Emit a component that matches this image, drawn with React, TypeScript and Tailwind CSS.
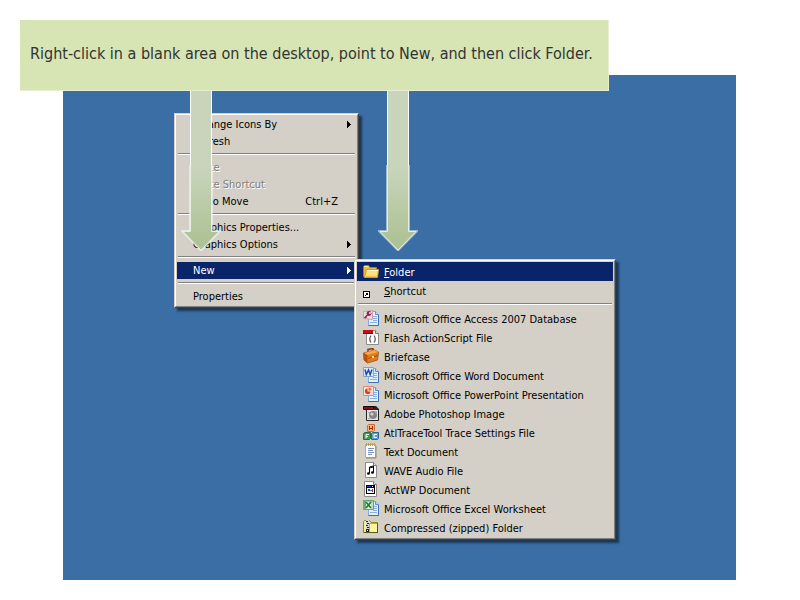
import type { ReactNode } from "react";
import clsx from "clsx";

function Icon({ children }: { children: ReactNode }) {
  return (
    <svg viewBox="0 0 16 16" className="h-4 w-4 shrink-0" aria-hidden="true">
      {children}
    </svg>
  );
}

function FolderIcon() {
  return (
    <Icon>
      <path d="M.5 13.5v-10l1-1h4l1.5 2h6.5v9z" fill="#f0b93c" stroke="#b9791a" />
      <path d="M1.5 3.5h4" stroke="#fff0a8" />
      <path d="M1.5 14.5l2-8h12l-1 8z" fill="#ffe07a" stroke="#d79b27" />
      <path d="M4 7.5h11" stroke="#fff9cf" />
      <path d="M3 13.5h11" stroke="#f3bf4a" />
    </Icon>
  );
}

function ShortcutIcon() {
  return (
    <Icon>
      <g shapeRendering="crispEdges">
        <path d="M0 9h7v7H0z" fill="#000" />
        <path d="M1 10h5v5H1z" fill="#fff" />
        <path d="M3 11h2v2H4v-1H3zM3 12h1v1H3zM2 13h1v1H2z" fill="#000" />
      </g>
    </Icon>
  );
}

function BlueSheet() {
  return (
    <>
      <path d="M5.5 1.5h7l3 3v11h-10z" fill="#e3efff" stroke="#86abdb" />
      <path d="M15.5 4.5v11h-10" fill="none" stroke="#3f70b4" />
      <path d="M12.5 1.5v3h3" fill="#b8d2f5" stroke="#5f8fcd" />
      <path d="M10 6.5h4M10 8.5h4M10 10.5h4M7 12.5h7" stroke="#8bb0e2" />
    </>
  );
}

function AccessIcon() {
  return (
    <Icon>
      <BlueSheet />
      <path d="M.5 1.5l9-1v9l-9-1z" fill="#efdce2" stroke="#c9a0ac" />
      <circle cx="6" cy="3.5" r="2.4" fill="#8f2444" />
      <circle cx="7" cy="3" r="1" fill="#f5e4ea" />
      <path d="M5 4.5L1.5 8M2 6.5l1.5 1.5" stroke="#8f2444" strokeWidth="1.4" />
    </Icon>
  );
}

function FlashIcon() {
  return (
    <Icon>
      <path d="M3.5 1.5h9l3 3v11h-12z" fill="#fff" stroke="#8b8b8b" />
      <path d="M12.5 1.5v3h3" fill="#ddd" stroke="#777" />
      <path d="M0 1h10v3H0z" fill="#c40d16" />
      <path d="M0 4h10v1H0z" fill="#6d0a0c" />
      <path d="M8 6.5q-2.500 3.500 0 7M11 6.500q2.500 3.500 0 7" fill="none" stroke="#555" strokeWidth="1.2" />
    </Icon>
  );
}

function BriefcaseIcon() {
  return (
    <Icon>
      <path d="M5 4V1.5l5-1V3" fill="none" stroke="#8a3a14" strokeWidth="1.6" />
      <path d="M.5 5l11-3 4 2-1 8-10 3-3.5-3z" fill="#e17c1c" stroke="#b0591c" />
      <path d="M1 5l3.5 2 11-3-4-2z" fill="#f7a548" />
      <path d="M4.5 7v8L1 12V5.500z" fill="#b55313" />
      <path d="M5 10.5l10-3" stroke="#a94b0e" />
      <path d="M9 8h2v2H9z" fill="#ffe58a" />
    </Icon>
  );
}

function WordIcon() {
  return (
    <Icon>
      <BlueSheet />
      <path d="M.5.5h10v9h-10z" fill="#dce9fb" stroke="#7fa2d8" />
      <path d="M2 2.5l1.3 5L5.5 3l1.7 4.5L9 2.5" fill="none" stroke="#1f4fa5" strokeWidth="1.5" />
    </Icon>
  );
}

function PowerPointIcon() {
  return (
    <Icon>
      <BlueSheet />
      <path d="M.5.5h10v9h-10z" fill="#fbe3db" stroke="#e28a74" />
      <path d="M4.5 2.5a2.8 2.8 0 1 0 3 3h-3z" fill="#d43c20" />
      <path d="M5.5 1.5a3 3 0 0 1 3 3h-3z" fill="#e9663f" />
    </Icon>
  );
}

function PhotoshopIcon() {
  return (
    <Icon>
      <path d="M3.5 1.5h9l3 3v11h-12z" fill="#e4e4e4" stroke="#222" />
      <path d="M11 1h2l3 3v1h-5z" fill="#222" />
      <path d="M.5 1.5h10v3H.5z" fill="#8f0a17" stroke="#160306" />
      <circle cx="10" cy="10" r="4" fill="#858585" />
      <circle cx="9" cy="9" r="1.6" fill="#d4d4d4" />
      <path d="M5 7h2v1H5zM12 6h2v2h-2zM5 13h2v1H5z" fill="#aaa" />
    </Icon>
  );
}

function BlocksIcon() {
  return (
    <Icon>
      <path d="M4.5 1.5l1-1h6v6l-1 1h-6z" fill="#f4b183" stroke="#cf6d34" />
      <path d="M6.5 2v4M9.5 2v4M6.5 4.5h3" stroke="#a92b10" />
      <path d="M.5 9.5l1-1h6v6l-1 1h-6z" fill="#3f9a58" stroke="#28713a" />
      <path d="M3 14.5v-4h3M3 12.5h2" fill="none" stroke="#fff" />
      <path d="M8.5 9.5l1-1h6v6l-1 1h-6z" fill="#5aa3d0" stroke="#2c659d" />
      <path d="M14 10.5h-3v3h3" fill="none" stroke="#fff" />
    </Icon>
  );
}

function TextIcon() {
  return (
    <Icon>
      <path d="M2.5 1.5h10v13h-10z" fill="#f8fbff" stroke="#a3adbd" />
      <path d="M13 3v12H3" fill="none" stroke="#9b8a65" />
      <path d="M3.5 0v3M5.5 0v3M7.5 0v3M9.5 0v3M11.5 0v3" stroke="#c39b48" />
      <path d="M5 5.5h6M5 7.5h5M5 9.5h6M5 11.5h4" stroke="#7d93b6" />
    </Icon>
  );
}

function WaveIcon() {
  return (
    <Icon>
      <path d="M2.5.5h8l3 3v12h-11z" fill="#fff" stroke="#8b8b8b" />
      <path d="M10.5.5v3h3" fill="#ddd" stroke="#777" />
      <path d="M6.5 11V5l4-1v6" fill="none" stroke="#000" />
      <path d="M6.5 6l4-1" stroke="#000" />
      <ellipse cx="5.5" cy="11.5" rx="1.5" ry="1.2" />
      <ellipse cx="9.5" cy="10.5" rx="1.5" ry="1.2" />
    </Icon>
  );
}

function ActWpIcon() {
  return (
    <Icon>
      <path d="M1.5.5h9l3 3v12h-12z" fill="#fff" stroke="#8b8b8b" />
      <path d="M10.5.5v3h3" fill="#ddd" stroke="#777" />
      <g shapeRendering="crispEdges">
        <path d="M3 4h9v9H3z" fill="#000" />
        <path d="M4 7h7v5H4z" fill="#fff" />
        <path d="M4 5h4v1H4z" fill="#2636c4" />
        <path d="M9 5h1v1H9z" fill="#fff" />
        <path d="M5 8h2v2H5z" fill="#2a3dd0" />
        <path d="M9 8h1v3H9zM8 9h1v1H8z" fill="#d02020" />
        <path d="M7 9h1v1H7z" fill="#2c9cb8" />
      </g>
    </Icon>
  );
}

function ExcelIcon() {
  return (
    <Icon>
      <BlueSheet />
      <path d="M.5.5h10v9h-10z" fill="#e2f3e1" stroke="#5fa568" />
      <path d="M0 0h3v10H0z" fill="#69ae70" />
      <path d="M9 1v8M4 1.5h6" stroke="#9bcc9d" />
      <path d="M3 2l5 6M8 2l-5 6" stroke="#217a35" strokeWidth="1.6" />
    </Icon>
  );
}

function ZipIcon() {
  return (
    <Icon>
      <path d="M.5 13.5v-11l1-1h5l1.5 2h6.5v10z" fill="#f7f08a" stroke="#8f8a1a" />
      <path d="M6.5 4.5h8v9h-8z" fill="#faf5a0" stroke="#b5ae3a" />
      <path d="M1 13.5h14M14.5 4v10" stroke="#5f5a10" />
      <g shapeRendering="crispEdges">
        <path d="M3 1h3v12H3z" fill="#d8d8d8" />
        <path d="M3 2h2v1H3zM4 4h2v1H4zM3 6h2v1H3zM4 8h2v1H4zM3 10h3v3H3z" fill="#222" />
        <path d="M4 11h1v1H4z" fill="#fff" />
      </g>
    </Icon>
  );
}

const newItems = [
  { label: "Microsoft Office Access 2007 Database", icon: <AccessIcon /> },
  { label: "Flash ActionScript File", icon: <FlashIcon /> },
  { label: "Briefcase", icon: <BriefcaseIcon /> },
  { label: "Microsoft Office Word Document", icon: <WordIcon /> },
  { label: "Microsoft Office PowerPoint Presentation", icon: <PowerPointIcon /> },
  { label: "Adobe Photoshop Image", icon: <PhotoshopIcon /> },
  { label: "AtlTraceTool Trace Settings File", icon: <BlocksIcon /> },
  { label: "Text Document", icon: <TextIcon /> },
  { label: "WAVE Audio File", icon: <WaveIcon /> },
  { label: "ActWP Document", icon: <ActWpIcon /> },
  { label: "Microsoft Office Excel Worksheet", icon: <ExcelIcon /> },
  { label: "Compressed (zipped) Folder", icon: <ZipIcon /> },
];

function Menu({ label, className, children }: { label: string; className: string; children: ReactNode }) {
  return (
    <div
      role="menu"
      aria-label={label}
      className={clsx(
        "border border-t-[#d4d0c8] border-l-[#d4d0c8] border-r-[#404040] border-b-[#404040] shadow-[3px_3px_2px_rgba(0,0,0,0.5)]",
        className
      )}
    >
      <div className="border border-t-white border-l-white border-r-[#808080] border-b-[#808080] bg-[#d4d0c8] p-px">
        {children}
      </div>
    </div>
  );
}

function Separator() {
  return <div role="separator" className="mx-px mt-[3px] mb-1 h-[2px] border-t border-[#808080] bg-white" />;
}

type ItemProps = {
  label: string;
  shortcut?: string;
  active?: boolean;
  disabled?: boolean;
  submenu?: boolean;
};

function Item({ label, shortcut, active, disabled, submenu }: ItemProps) {
  return (
    <button
      type="button"
      role="menuitem"
      disabled={disabled}
      aria-haspopup={submenu ? "menu" : undefined}
      className={clsx(
        "flex h-[17px] w-full items-center pr-[5px] pl-4 text-left",
        active && "bg-[#0a246a] text-white",
        disabled && "text-[#808080] [text-shadow:1px_1px_0_#fff]"
      )}
    >
      <span className="flex-1">{label}</span>
      {shortcut && <span className="pr-[13px]">{shortcut}</span>}
      {submenu && (
        <svg viewBox="0 0 4 7" className="h-[7px] w-1" fill="currentColor" shapeRendering="crispEdges" aria-hidden="true">
          <path d="M0 0h1v1h1v1h1v1h1v1H3v1H2v1H1v1H0z" />
        </svg>
      )}
    </button>
  );
}

function NewItem({ icon, active, children }: { icon: ReactNode; active?: boolean; children: ReactNode }) {
  return (
    <button
      type="button"
      role="menuitem"
      className={clsx(
        "flex h-[19px] w-full items-start gap-[5px] pt-px pl-1.5 text-left leading-[19px]",
        active && "bg-[#0a246a] text-white"
      )}
    >
      {icon}
      <span>{children}</span>
    </button>
  );
}

function PointerArrow({ id, className }: { id: string; className: string }) {
  return (
    <svg viewBox="0 0 40 160" className={clsx("absolute top-[91px] h-40 w-10", className)} aria-hidden="true">
      <defs>
        <linearGradient id={id} x1="0" y1="0" x2="0" y2="1">
          <stop offset="0" stopColor="#c8d5bb" />
          <stop offset=".48" stopColor="#c8d5bb" />
          <stop offset=".92" stopColor="#afc397" />
          <stop offset="1" stopColor="#afc397" />
        </linearGradient>
      </defs>
      <path d="M9 74V140H1L20 159.5L39 140H31V74" fill="none" stroke="#fff" strokeOpacity=".5" strokeWidth="2" />
      <path d="M9.5 0V140.5H2L20 159L38 140.5H30.5V0z" fill={`url(#${id})`} />
      <path d="M9.5 0V74M30.5 0V74" stroke="#fff" />
      <path d="M9.5 74V140.5H2L20 159L38 140.5H30.5V74" fill="none" stroke="#e9efe3" />
    </svg>
  );
}

export default function App() {
  return (
    <main className="relative bg-white pt-[75px] pr-16 pb-5 pl-[63px]">
      <section className="flex items-start bg-[#3a6ea5] pt-[38px] pb-10 pl-[111px] font-['DejaVu_Sans_Condensed','DejaVu_Sans',sans-serif] text-[11px] leading-[17px] text-black">
        <Menu label="Desktop" className="w-[185px]">
          <Item label="Arrange Icons By" submenu />
          <Item label="Refresh" />
          <Separator />
          <Item label="Paste" disabled />
          <Item label="Paste Shortcut" disabled />
          <Item label="Undo Move" shortcut="Ctrl+Z" />
          <Separator />
          <Item label="Graphics Properties..." />
          <Item label="Graphics Options" submenu />
          <Separator />
          <Item label="New" active submenu />
          <Separator />
          <Item label="Properties" />
        </Menu>
        <Menu label="New" className="z-10 mt-[146px] -ml-[5px] w-[262px]">
          <NewItem icon={<FolderIcon />} active>
            <u>F</u>older
          </NewItem>
          <NewItem icon={<ShortcutIcon />}>
            <u>S</u>hortcut
          </NewItem>
          <Separator />
          {newItems.map((item) => (
            <NewItem key={item.label} icon={item.icon}>
              {item.label}
            </NewItem>
          ))}
        </Menu>
      </section>

      <PointerArrow id="arrow-new" className="left-[181px] z-20" />
      <PointerArrow id="arrow-folder" className="left-[378px] z-20" />

      <p className="absolute top-5 left-5 z-20 border-r border-b border-[#e6efd2] bg-[#d6e5b3] pt-[21px] pr-[15px] pb-[23px] pl-[10px] font-['DejaVu_Sans_Condensed','DejaVu_Sans',sans-serif] text-[16px] leading-[26px] text-[#333]">
        Right-click in a blank area on the desktop, point to New, and then click Folder.
      </p>
    </main>
  );
}
